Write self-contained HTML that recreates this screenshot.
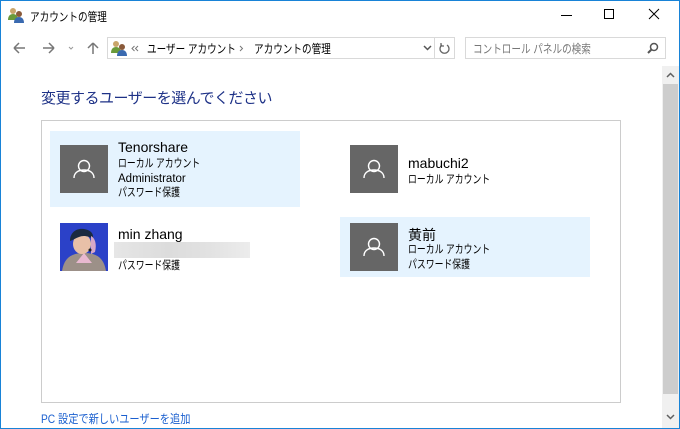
<!DOCTYPE html>
<html><head><meta charset="utf-8"><style>
*{margin:0;padding:0;box-sizing:border-box}
body{width:680px;height:429px;overflow:hidden;background:#fff;font-family:"Liberation Sans","Noto Sans CJK JP",sans-serif;position:relative;color:#000}
.a{position:absolute}
.win{left:0;top:0;width:680px;height:429px;border:1px solid #1883d7}
.t{font-size:12px;white-space:nowrap;transform:scaleX(0.8);transform-origin:0 0}
.av{position:absolute;width:48px;height:48px;background:#666}
.hl{position:absolute;background:#e5f3fe}
.nm{font-size:14px;position:absolute;white-space:nowrap}
.sb{font-size:11.5px;position:absolute;white-space:nowrap;line-height:14px;transform:scaleX(0.77);transform-origin:0 0}
.sb.l{transform:none}
</style></head><body>
<div class="a win"></div>
<svg class="a" style="left:7px;top:7px" width="18" height="16" viewBox="0 0 18 16"><circle cx="6" cy="4" r="3" fill="#c9a56a"/><path d="M1 13c0-4 2-6 5-6s5 2 5 6z" fill="#6a9a3a"/><circle cx="12" cy="7" r="3" fill="#8a5a3a"/><path d="M7 16c0-4 2-6 5-6s5 2 5 6z" fill="#3a6ab0"/></svg>
<div class="a t" style="left:30px;top:8px">アカウントの管理</div>
<div class="a" style="left:561px;top:15px;width:11px;height:1px;background:#000"></div>
<div class="a" style="left:604px;top:9px;width:10px;height:10px;border:1px solid #000"></div>
<svg class="a" style="left:648px;top:8px" width="12" height="12"><path d="M1 1L11 11M11 1L1 11" stroke="#000" stroke-width="1"/></svg>
<svg class="a" style="left:12px;top:40px" width="90" height="16" viewBox="0 0 90 16"><path d="M2 8h11M2 8l5-5M2 8l5 5" stroke="#777" stroke-width="1.5" fill="none"/><path d="M42 8H31M42 8l-5-5M42 8l-5 5" stroke="#777" stroke-width="1.5" fill="none"/><path d="M57 7l2 2 2-2" stroke="#999" fill="none"/><path d="M81 14V3M81 3l-5 5M81 3l5 5" stroke="#777" stroke-width="1.5" fill="none"/></svg>
<div class="a" style="left:107px;top:37px;width:348px;height:22px;border:1px solid #d9d9d9"></div>
<div class="a" style="left:434px;top:37px;width:1px;height:22px;background:#d9d9d9"></div>
<svg class="a" style="left:110px;top:40px" width="18" height="16" viewBox="0 0 18 16"><circle cx="6" cy="4" r="3" fill="#c9a56a"/><path d="M1 13c0-4 2-6 5-6s5 2 5 6z" fill="#6a9a3a"/><circle cx="12" cy="7" r="3" fill="#8a5a3a"/><path d="M7 16c0-4 2-6 5-6s5 2 5 6z" fill="#3a6ab0"/></svg>
<svg class="a" style="left:131px;top:45px" width="8" height="7"><path d="M3.5 1L1 3.5 3.5 6M7 1L4.5 3.5 7 6" stroke="#777" fill="none"/></svg>
<div class="a t" style="left:147px;top:40px">ユーザー アカウント</div>
<svg class="a" style="left:239px;top:45px" width="5" height="7"><path d="M1 1l2.5 2.5L1 6" stroke="#777" fill="none"/></svg>
<div class="a t" style="left:254px;top:40px">アカウントの管理</div>
<svg class="a" style="left:423px;top:45px" width="9" height="6"><path d="M1 1l3.5 3.5L8 1" stroke="#555" stroke-width="1.5" fill="none"/></svg>
<svg class="a" style="left:438px;top:41px" width="13" height="14"><path d="M9 4A4.5 4.5 0 1 1 4 4" stroke="#666" stroke-width="1.3" fill="none"/><path d="M3 2v3h3" stroke="#666" stroke-width="1.3" fill="none"/></svg>
<div class="a" style="left:465px;top:37px;width:201px;height:22px;border:1px solid #d9d9d9"></div>
<div class="a t" style="left:473px;top:40px;color:#777">コントロール パネルの検索</div>
<svg class="a" style="left:647px;top:42px" width="12" height="12"><circle cx="7" cy="5" r="3.5" stroke="#555" stroke-width="1.5" fill="none"/><path d="M4.5 7.5L1 11" stroke="#555" stroke-width="2"/></svg>
<div class="a" style="left:662px;top:66px;width:17px;height:362px;background:#f0f0f0"></div>
<div class="a" style="left:663px;top:84px;width:15px;height:310px;background:#cdcdcd"></div>
<svg class="a" style="left:666px;top:72px" width="9" height="6"><path d="M1 5l3.5-3.5L8 5" stroke="#606060" stroke-width="1.5" fill="none"/></svg>
<svg class="a" style="left:666px;top:414px" width="9" height="6"><path d="M1 1l3.5 3.5L8 1" stroke="#606060" stroke-width="1.5" fill="none"/></svg>
<div class="a" style="left:41px;top:87px;font-size:15px;color:#1e3287;white-space:nowrap;letter-spacing:-0.5px">変更するユーザーを選んでください</div>
<div class="a" style="left:41px;top:120px;width:580px;height:283px;border:1px solid #ccc"></div>
<div class="hl" style="left:50px;top:131px;width:250px;height:76px"></div>
<div class="hl" style="left:340px;top:217px;width:250px;height:60px"></div>
<svg width="0" height="0" style="position:absolute"><defs><g id="u"><circle cx="24" cy="21" r="5.5" stroke="#fff" stroke-width="1.4" fill="none"/><path d="M14 33c0-5.5 4.5-8 10-8s10 2.5 10 8" stroke="#fff" stroke-width="1.4" fill="none"/></g></defs></svg>
<svg class="av" style="left:60px;top:145px"><use href="#u"/></svg>
<svg class="av" style="left:350px;top:145px"><use href="#u"/></svg>
<svg class="av" style="left:350px;top:223px"><use href="#u"/></svg>
<svg class="av" style="left:60px;top:223px;background:#2a3fbf" viewBox="0 0 48 48"><rect width="48" height="48" fill="#2b41c8"/><path d="M2 48c2-12 8-18 22-18s20 6 22 18z" fill="#9c9088"/><path d="M16 40l8-10 8 10z" fill="#e8b8d0"/><ellipse cx="22" cy="21" rx="9" ry="10" fill="#e8c0a8"/><path d="M10 18c0-10 8-13 14-12s10 4 9 10c-4-3-10-4-14-2-3 1-6 3-9 4z" fill="#1a2a40"/><path d="M31 13c4 2 6 8 4 16l-4 2z" fill="#d8a8c8"/><circle cx="30" cy="27" r="1.5" fill="#222"/></svg>
<div class="nm" style="left:118px;top:139px">Tenorshare</div>
<div class="sb" style="left:118px;top:157px">ローカル アカウント</div>
<div class="sb l" style="left:118px;top:172px">Administrator</div>
<div class="sb" style="left:118px;top:186px">パスワード保護</div>
<div class="nm" style="left:408px;top:155px">mabuchi2</div>
<div class="sb" style="left:408px;top:173px">ローカル アカウント</div>
<div class="nm" style="left:118px;top:226px">min zhang</div>
<div class="a" style="left:114px;top:242px;width:136px;height:16px;background:linear-gradient(90deg,#e6e6e6,#dcdcdc 40%,#e2e2e2 70%,#ececec)"></div>
<div class="sb" style="left:118px;top:259px">パスワード保護</div>
<div class="nm" style="left:408px;top:225px">黄前</div>
<div class="sb" style="left:408px;top:243px">ローカル アカウント</div>
<div class="sb" style="left:408px;top:258px">パスワード保護</div>
<div class="a t" style="left:41px;top:410px;color:#1a5fcf;transform:scaleX(0.85)">PC 設定で新しいユーザーを追加</div>
</body></html>
